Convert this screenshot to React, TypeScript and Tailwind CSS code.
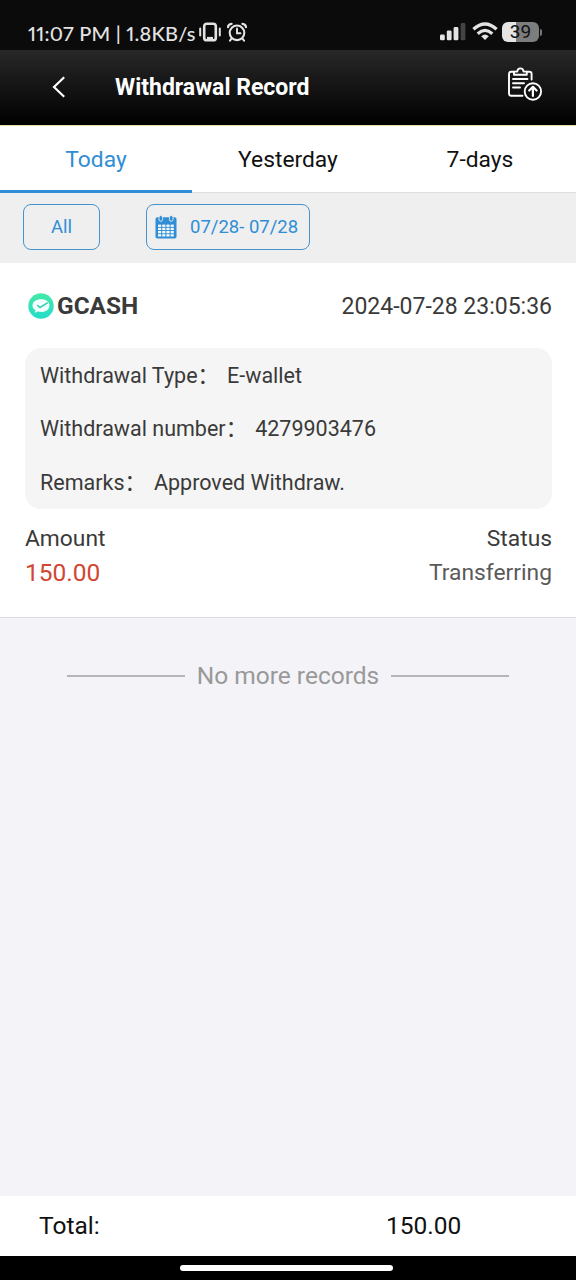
import type { ReactNode } from "react";

function StatusBar() {
  return (
    <div className="flex h-[50px] items-start bg-[#0b0b0b] pl-[28px] pr-[34px] text-[#e3e3e3]">
      <span className="mt-[20px] w-[170px] whitespace-nowrap font-[Lato,sans-serif] text-[20px] font-medium proportional-nums leading-[26px] tracking-[0.23px]">
        11:07 PM | 1.8KB/s
      </span>
      <svg className="mt-[22px] h-[20px] w-[24px]" viewBox="0 0 24 20" fill="none" stroke="currentColor">
        <rect x="6.2" y="1.7" width="11.6" height="16.6" rx="2.6" strokeWidth="2.6" />
        <path d="M9 16.2h6" strokeWidth="2.6" />
        <path d="M2.2 6.500v7M21.800 6.500v7" strokeWidth="2" strokeLinecap="round" />
      </svg>
      <svg className="ml-[4px] mt-[22px] h-[20px] w-[22px]" viewBox="0 0 22 20" fill="none" stroke="currentColor" strokeLinecap="round">
        <circle cx="11" cy="10.8" r="7.3" strokeWidth="2.1" />
        <path d="M11 6.5v4.8h3.5" strokeWidth="1.9" />
        <path d="M2 5.2 Q2 2.2 5.6 1.8M20 5.2Q20 2.2 16.4 1.8" strokeWidth="2.2" />
        <path d="M5.5 16.7 4 18.6M16.5 16.7 18 18.6" strokeWidth="2" />
      </svg>
      <svg className="ml-auto mt-[23px] h-[18px] w-[28px]" viewBox="0 0 28 18" fill="currentColor">
        <rect x="0" y="11.5" width="4.8" height="5.8" rx="1.4" />
        <rect x="6.8" y="7.4" width="4.8" height="9.9" rx="1.4" />
        <rect x="13.6" y="4" width="4.8" height="13.3" rx="1.4" />
        <rect x="20.6" y="0" width="4.8" height="17.3" rx="1.4" fill="#444" />
      </svg>
      <svg className="ml-[4px] mt-[22px] h-[18px] w-[26px]" viewBox="0 0 26 18" fill="none" stroke="currentColor" strokeWidth="3.2">
        <path d="M1.4 7.2Q13-3.2 24.6 7.2" />
        <path d="M5.7 11.7Q13 5.2 20.3 11.7" />
        <path d="M9.2 14.2Q13 11 16.8 14.2L13 18z" fill="currentColor" stroke="none" />
      </svg>
      <div className="ml-[4px] mt-[22px] flex items-center">
        <div className="flex h-[20px] w-[37px] items-center justify-center rounded-[6px] bg-[linear-gradient(90deg,#e5e5e5_39%,#7d7d7d_39%)] font-[Roboto,sans-serif] text-[19px] leading-[20px] text-[#111]">
          39
        </div>
        <div className="ml-[1px] h-[7px] w-[2px] rounded-r-full bg-[#777]" />
      </div>
    </div>
  );
}

function Header() {
  return (
    <div className="flex h-[76px] items-center border-b border-[#e9dda6] bg-[linear-gradient(180deg,#282828,#000)] text-white">
      <svg className="-mt-[2px] ml-[52px] h-[22px] w-[14px]" viewBox="0 0 14 22" fill="none" stroke="currentColor" strokeWidth="2.2">
        <path d="M12.2 1.3 2 11l10.2 9.7" />
      </svg>
      <h1 className="ml-[49px] text-[23px] font-bold leading-[28px]">Withdrawal Record</h1>
      <svg className="-mt-[6px] ml-auto mr-[33px] h-[35px] w-[36px]" viewBox="0 0 36 35" fill="none" stroke="currentColor" strokeWidth="1.9" strokeLinecap="round" strokeLinejoin="round">
        <path d="M7 4.8H4.200Q2 4.800 2 7v19.500q0 2.200 2.200 2.200h11.300M19.800 4.800h2.600q2.200 0 2.200 2.200v5.500" />
        <path d="M7 7.800V4.600h3.200q.4-3.200 3.200-3.200t3.200 3.200h3.200v3.200z" />
        <path d="M6 12h14.500M6 16.200h11M6 20.500h7" />
        <circle cx="25.900" cy="24.500" r="8.200" />
        <path d="M25.900 29v-9M22.200 23.500l3.700-3.700 3.700 3.700" strokeWidth="2.200" />
      </svg>
    </div>
  );
}

function Tabs() {
  return (
    <div className="grid h-[67px] grid-cols-3 text-center text-[22.8px] leading-[28px] text-[#111]">
      <div className="border-b-[3px] border-[#2f8ed5] pt-[20px] text-[#2f8ed5]">Today</div>
      <div className="border-b border-[#dedede] pt-[20px]">Yesterday</div>
      <div className="border-b border-[#dedede] pt-[20px]">7-days</div>
    </div>
  );
}

function CalendarIcon() {
  const cells = [0, 1, 2, 3].flatMap((r) => [0, 1, 2, 3].map((c) => ({ r, c })));
  return (
    <svg className="h-[24px] w-[22px]" viewBox="0 0 22 24">
      <rect x="0.5" y="2.2" width="21" height="21.3" rx="1.8" fill="#2f8ed5" />
      {cells.map(({ r, c }) => (
        <rect key={`${r}-${c}`} x={3 + c * 4.2} y={9.6 + r * 3.2} width="3.2" height="2.3" fill="#f3f8fb" />
      ))}
      <rect x="4" y="0.5" width="3.6" height="5.8" rx="1.8" fill="#2f8ed5" stroke="#efefef" strokeWidth="0.9" />
      <rect x="14.4" y="0.5" width="3.6" height="5.8" rx="1.8" fill="#2f8ed5" stroke="#efefef" strokeWidth="0.9" />
    </svg>
  );
}

function Filters() {
  return (
    <div className="flex h-[70px] items-start bg-[#efefef] pl-[23px] pt-[11px] text-[18.5px] text-[#2f8ed5]">
      <button className="h-[46px] w-[77px] rounded-[8px] border border-[#4594d0] pt-[2px]">All</button>
      <button className="ml-[46px] flex h-[46px] w-[164px] items-center rounded-[8px] border border-[#4594d0] pl-[8px]">
        <CalendarIcon />
        <span className="ml-[13px] whitespace-nowrap pt-[2px]">07/28- 07/28</span>
      </button>
    </div>
  );
}

function Detail({ label, children }: { label: string; children: ReactNode }) {
  return (
    <div className="flex h-[53.5px] items-center whitespace-nowrap pt-[2px] leading-[28px]">
      <span>{label}：</span>
      <span className="ml-[8px]">{children}</span>
    </div>
  );
}

function RecordCard() {
  return (
    <div className="h-[355px] border-b border-[#dcdce0] bg-white pl-[25px] pr-[24px] text-[#3a3a3a]">
      <div className="flex h-[85px] items-center">
        <svg className="ml-[3px] h-[26px] w-[26px]" viewBox="0 0 26 26">
          <defs>
            <linearGradient id="wallet" x1="0" y1="0" x2="0" y2="1">
              <stop offset="0" stopColor="#45e9a6" />
              <stop offset="1" stopColor="#24dccb" />
            </linearGradient>
          </defs>
          <circle cx="13" cy="13" r="12.7" fill="url(#wallet)" />
          <path d="M13 6.200c5 0 8.500 2.600 8.500 6.300s-3.500 6.600-8.200 6.600c-1.400 0-2.300-.2-3.400-.5l-3.200 1.200.8-2.500c-2-1.200-3-2.800-3-4.800 0-3.700 3.800-6.300 8.500-6.300z" fill="#f2fffc" />
          <path d="m9.200 12.200 2.800 2.300 7.800-4.800" fill="none" stroke="#35cdb5" strokeWidth="1.500" />
        </svg>
        <span className="ml-[3px] pt-[2px] text-[24.4px] font-bold">GCASH</span>
        <span className="ml-auto pt-[4px] text-[23px]">2024-07-28 23:05:36</span>
      </div>
      <div className="h-[161px] rounded-[16px] bg-[#f5f5f5] pl-[15px] text-[21.5px]">
        <Detail label="Withdrawal Type">E-wallet</Detail>
        <Detail label="Withdrawal number">4279903476</Detail>
        <Detail label="Remarks">Approved Withdraw.</Detail>
      </div>
      <div className="mt-[13px] flex justify-between text-[22.8px] leading-[34px]">
        <div>
          <div>Amount</div>
          <div className="text-[24.5px] text-[#d14632]">150.00</div>
        </div>
        <div className="text-right">
          <div>Status</div>
          <div className="text-[#5a5a5a]">Transferring</div>
        </div>
      </div>
    </div>
  );
}

export default function App() {
  return (
    <div lang="zh-CN" className="flex h-[1280px] w-[576px] flex-col overflow-hidden bg-[#f3f3f8] font-[Roboto,'Noto_Sans_CJK_SC',sans-serif]">
      <StatusBar />
      <Header />
      <div className="-mt-px pt-px">
        <div className="bg-white">
          <Tabs />
          <Filters />
          <RecordCard />
        </div>
      </div>
      <div className="mt-[40px] flex items-center justify-center text-[24.5px] leading-[36px] text-[#999]">
        <span className="h-[2px] w-[118px] bg-[#b5b5b8]" />
        <span className="w-[206px] whitespace-nowrap text-center">No more records</span>
        <span className="h-[2px] w-[118px] bg-[#b5b5b8]" />
      </div>
      <div className="mt-auto flex h-[60px] items-center bg-white text-[24.5px] text-[#111]">
        <span className="ml-[39px] w-[347px]">Total:</span>
        <span>150.00</span>
      </div>
      <div className="flex h-[24px] justify-center bg-black pr-[4px] pt-[9px]">
        <div className="h-[6px] w-[213px] rounded-full bg-white" />
      </div>
    </div>
  );
}
